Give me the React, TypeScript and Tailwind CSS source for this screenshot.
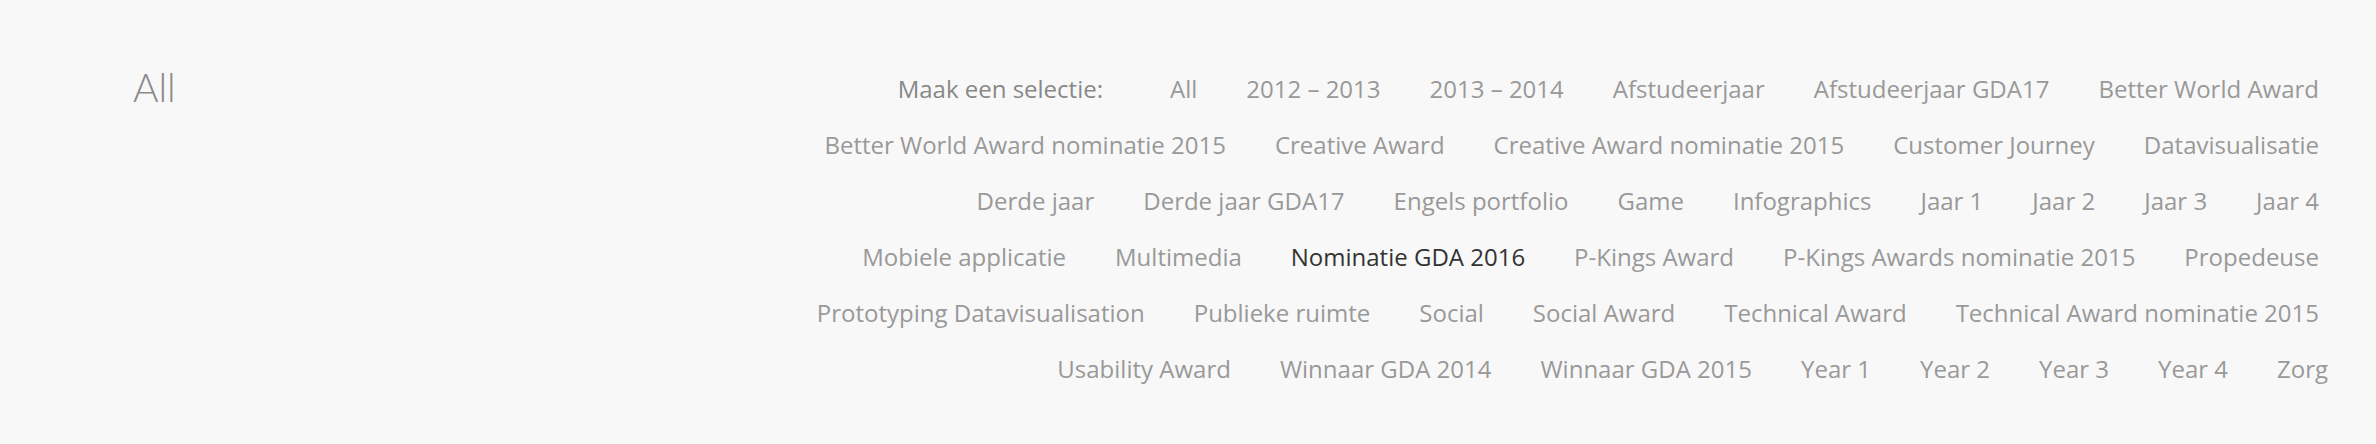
import React from "react";

const rows: string[][] = [
  ["All", "2012 – 2013", "2013 – 2014", "Afstudeerjaar", "Afstudeerjaar GDA17", "Better World Award"],
  ["Better World Award nominatie 2015", "Creative Award", "Creative Award nominatie 2015", "Customer Journey", "Datavisualisatie"],
  ["Derde jaar", "Derde jaar GDA17", "Engels portfolio", "Game", "Infographics", "Jaar 1", "Jaar 2", "Jaar 3", "Jaar 4"],
  ["Mobiele applicatie", "Multimedia", "Nominatie GDA 2016", "P-Kings Award", "P-Kings Awards nominatie 2015", "Propedeuse"],
  ["Prototyping Datavisualisation", "Publieke ruimte", "Social", "Social Award", "Technical Award", "Technical Award nominatie 2015"],
  ["Usability Award", "Winnaar GDA 2014", "Winnaar GDA 2015", "Year 1", "Year 2", "Year 3", "Year 4", "Zorg"],
];

export default function App() {
  return (
    <div className="min-h-screen w-full bg-[#f8f8f8] flex pt-[61px] pr-[48px]">
      <div className="pl-[133px] shrink-0">
        <h1
          className="mt-[7px] text-[39px] leading-[39px] font-light text-[#8a8a8a]"
          style={{ fontFamily: "Lato, 'Open Sans', sans-serif" }}
        >
          All
        </h1>
      </div>
      <nav
        className="flex-1 flex flex-col items-end text-[24px] leading-[56px] text-[#999999]"
        style={{ fontFamily: "'Open Sans', 'Noto Sans', sans-serif" }}
      >
        {rows.map((row, ri) => (
          <div key={ri} className="flex justify-end whitespace-nowrap">
            {ri === 0 && <span className="text-[#888888] mr-[27px]">Maak een selectie:</span>}
            {row.map((item, ii) => {
              const isLast = ri === rows.length - 1 && ii === row.length - 1;
              const active = item === "Nominatie GDA 2016";
              return (
                <a
                  key={item}
                  href="#"
                  className={
                    (isLast ? "ml-[40px] mr-0 " : "ml-[40px] mr-[9px] ") +
                    (active ? "text-[#333333]" : "text-[#999999]")
                  }
                >
                  {item}
                </a>
              );
            })}
          </div>
        ))}
      </nav>
    </div>
  );
}
